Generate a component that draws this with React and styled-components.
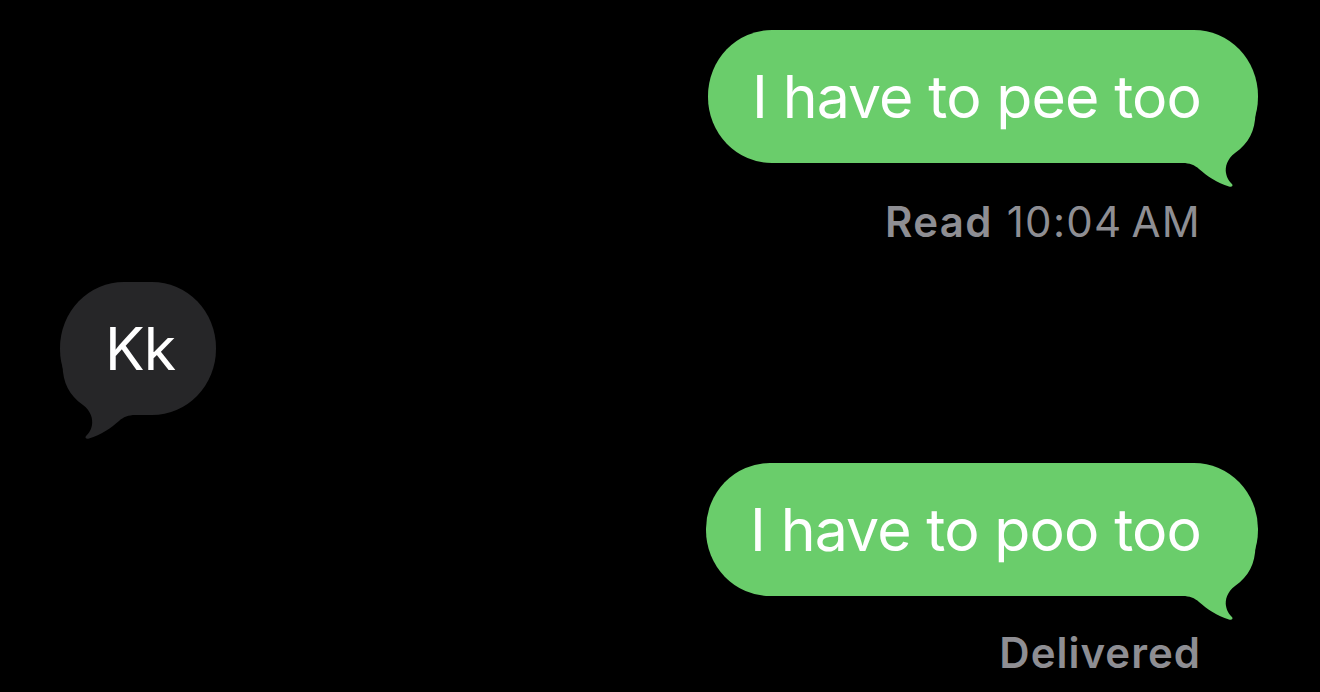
import React from "react";
import styled, { createGlobalStyle } from "styled-components";

const GlobalStyle = createGlobalStyle`
  html, body {
    margin: 0;
    padding: 0;
    background: #000;
  }
  body {
    font-family: Inter, "Noto Sans", "Liberation Sans", sans-serif;
    -webkit-font-smoothing: antialiased;
  }
`;

const Screen = styled.div`
  width: 1320px;
  height: 692px;
  box-sizing: border-box;
  background: #000;
  overflow: hidden;
  padding: 30px 62px 0 60px;
  display: flex;
  flex-direction: column;
`;

const Row = styled.div`
  display: flex;
  justify-content: ${(p) => (p.$out ? "flex-end" : "flex-start")};
  margin-top: ${(p) => p.$gap || 0}px;
`;

const Bubble = styled.div`
  position: relative;
  height: 133px;
  box-sizing: border-box;
  display: flex;
  align-items: center;
  border-radius: 64px / 66px;
  padding: ${(p) => (p.$out ? "0 57px 0 44px" : "0 41px 0 45px")};
  background: ${(p) => (p.$out ? "#6acd6b" : "#262628")};
  color: #fff;
  font-size: 59px;
  letter-spacing: -0.9px;
  white-space: nowrap;
`;

const BubbleText = styled.span`
  position: relative;
  z-index: 1;
`;

const Tail = styled.svg`
  position: absolute;
  z-index: 0;
  bottom: -26px;
  width: 75px;
  height: 76px;
  ${(p) =>
    p.$out
      ? "right: 0;"
      : "left: 0; transform: scaleX(-1);"}
`;

const Status = styled.div`
  display: flex;
  justify-content: flex-end;
  gap: ${(p) => p.$spacing || 14}px;
  margin-top: ${(p) => p.$gap}px;
  padding-right: 57px;
  font-size: 42px;
  line-height: 48px;
  color: #8e8e93;
  letter-spacing: ${(p) => p.$track || 1}px;
`;

const Strong = styled.span`
  font-weight: 600;
`;

function BubbleTail({ out, color }) {
  return (
    <Tail $out={out} viewBox="0 0 75 76" aria-hidden="true">
      <path
        fill={color}
        d="M0 0 H72.5 C72 18 66 30 52 40 C44 46 42 54 43 60 C44 66 47 69 49 71 C50.5 73 48.5 74.5 46 73.5 C34 70 24 63 16 56 C12 52 6 50 0 50 Z"
      />
    </Tail>
  );
}

function Message({ out, text, gap }) {
  const color = out ? "#6acd6b" : "#262628";
  return (
    <Row $out={out} $gap={gap}>
      <Bubble $out={out}>
        <BubbleTail out={out} color={color} />
        <BubbleText>{text}</BubbleText>
      </Bubble>
    </Row>
  );
}

export default function App() {
  return (
    <>
      <GlobalStyle />
      <Screen>
        <Message out text="I have to pee too" />
        <Status $gap={35} $track={1.3} $spacing={14}>
          <Strong>Read</Strong>
          <span>10:04{"\u2009"}AM</span>
        </Status>
        <Message text="Kk" gap={36} />
        <Message out text="I have to poo too" gap={48} />
        <Status $gap={33}>
          <Strong>Delivered</Strong>
        </Status>
      </Screen>
    </>
  );
}
